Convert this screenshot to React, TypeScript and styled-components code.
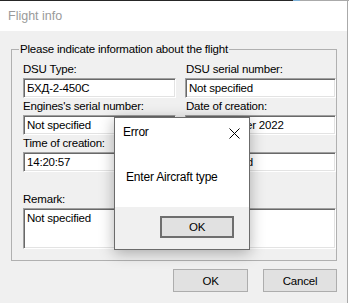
import React from 'react';
import styled, { createGlobalStyle } from 'styled-components';

const GlobalStyle = createGlobalStyle`
  * {
    box-sizing: border-box;
  }

  html, body {
    margin: 0;
    padding: 0;
    background: #ffffff;
  }

  body {
    font-family: "Liberation Sans", Arial, sans-serif;
    font-size: 11.5px;
    letter-spacing: -0.2px;
    color: #000000;
  }
`;

const Screen = styled.div`
  position: relative;
  width: 349px;
  height: 303px;
  overflow: hidden;
  display: flex;
  flex-direction: column;
`;

const TopStrip = styled.div`
  display: flex;
  height: 1px;
  flex: none;
`;

const StripPiece = styled.div<{ $width: number; $color: string }>`
  width: ${props => props.$width}px;
  background: ${props => props.$color};
`;

const Window = styled.div`
  width: 348px;
  flex: 1;
  display: flex;
  flex-direction: column;
  border-right: 1px solid #aaaaaa;
`;

const TitleBar = styled.div`
  height: 30px;
  flex: none;
  display: flex;
  align-items: center;
  padding-left: 8px;
  background: #ffffff;
  color: #9a9a9a;
  font-size: 12.5px;
  letter-spacing: 0;
  line-height: 16px;
`;

const Body = styled.div`
  flex: 1;
  background: #f0f0f0;
  padding: 10px 10px 0 11px;
`;

const GroupBox = styled.fieldset`
  width: 326px;
  margin: 0;
  padding: 4px 0 11px 11px;
  border: 1px solid #b0b0b0;
  min-width: 0;
`;

const GroupTitle = styled.legend`
  margin-left: -4px;
  padding: 0 1px;
  line-height: 16px;
`;

const FieldGrid = styled.div`
  display: grid;
  grid-template-columns: 153px 151px;
  column-gap: 9px;
`;

const Field = styled.div<{ $wide?: boolean }>`
  display: flex;
  flex-direction: column;
  grid-column: ${props => (props.$wide ? '1 / span 2' : 'auto')};
  margin-top: ${props => (props.$wide ? '19px' : '0')};
`;

const Label = styled.div<{ $shift?: number }>`
  line-height: 16px;
  height: 17px;
  padding-left: ${props => props.$shift || 0}px;
  white-space: nowrap;
`;

const TextBox = styled.div<{ $tall?: boolean }>`
  height: ${props => (props.$tall ? '41px' : '20px')};
  background: #ffffff;
  border-style: solid;
  border-width: 1px;
  border-color: #a0a0a0 #ffffff #ffffff #a0a0a0;
  box-shadow: inset 1px 1px 0 #696969, inset -1px -1px 0 #e3e3e3;
  padding: ${props => (props.$tall ? '1px 3px' : '1px 3px')};
  line-height: 16px;
  white-space: nowrap;
  overflow: hidden;
`;

const ButtonRow = styled.div`
  display: flex;
  justify-content: flex-end;
  gap: 15px;
  margin-top: 8px;
`;

const Button = styled.div<{ $width?: number }>`
  width: ${props => props.$width || 75}px;
  height: 23px;
  display: flex;
  align-items: center;
  justify-content: center;
  background: #e1e1e1;
  border: 1px solid #adadad;
`;

const Dialog = styled.div`
  position: absolute;
  left: 114px;
  top: 117px;
  width: 136px;
  height: 133px;
  display: flex;
  flex-direction: column;
  background: #ffffff;
  border: 1px solid #6b6b6b;
  box-shadow: 0 3px 14px rgba(0, 0, 0, 0.3);
`;

const DialogHeader = styled.div`
  display: flex;
  align-items: center;
  justify-content: space-between;
  padding: 6px 9px 0 8px;
  line-height: 16px;
  font-size: 12px;
`;

const CloseIcon = styled.svg`
  width: 11px;
  height: 11px;
  margin-top: 2px;
`;

const DialogMessage = styled.div`
  flex: 1;
  padding: 29px 0 0 11px;
  line-height: 16px;
  font-size: 12px;
`;

const DialogFooter = styled.div`
  height: 42px;
  display: flex;
  justify-content: flex-end;
  align-items: flex-start;
  padding: 9px 15px 0 0;
  background: #f0f0f0;
`;

const DefaultButton = styled.div`
  width: 74px;
  height: 22px;
  display: flex;
  align-items: center;
  justify-content: center;
  background: #e1e1e1;
  border: 2px solid #6e6e6e;
`;

const fields = [
  { label: 'DSU Type:', value: 'БХД-2-450С' },
  { label: 'DSU serial number:', value: 'Not specified', shift: 1 },
  { label: "Engines's serial number:", value: 'Not specified' },
  { label: 'Date of creation:', value: '21 December 2022', shift: 1 },
  { label: 'Time of creation:', value: '14:20:57' },
  { label: '', value: 'Not specified', shift: 1 }
];

export default function App() {
  return (
    <Screen>
      <GlobalStyle />
      <TopStrip>
        <StripPiece $width={293} $color="#262626" />
        <StripPiece $width={7} $color="#7fb2d8" />
        <StripPiece $width={49} $color="#aaaaaa" />
      </TopStrip>

      <Window>
        <TitleBar>Flight info</TitleBar>
        <Body>
          <GroupBox>
            <GroupTitle>Please indicate information about the flight</GroupTitle>
            <FieldGrid>
              {fields.map((field, index) => (
                <Field key={index}>
                  <Label $shift={field.shift}>{field.label}</Label>
                  <TextBox>{field.value}</TextBox>
                </Field>
              ))}
              <Field $wide>
                <Label>Remark:</Label>
                <TextBox $tall>Not specified</TextBox>
              </Field>
            </FieldGrid>
          </GroupBox>

          <ButtonRow>
            <Button>OK</Button>
            <Button $width={74}>Cancel</Button>
          </ButtonRow>
        </Body>
      </Window>

      <Dialog>
        <DialogHeader>
          <span>Error</span>
          <CloseIcon viewBox="0 0 11 11">
            <path d="M0.5 0.5 L10.5 10.5 M10.5 0.5 L0.5 10.5" stroke="#000" strokeWidth="1" fill="none" />
          </CloseIcon>
        </DialogHeader>
        <DialogMessage>Enter Aircraft type</DialogMessage>
        <DialogFooter>
          <DefaultButton>OK</DefaultButton>
        </DialogFooter>
      </Dialog>
    </Screen>
  );
}
